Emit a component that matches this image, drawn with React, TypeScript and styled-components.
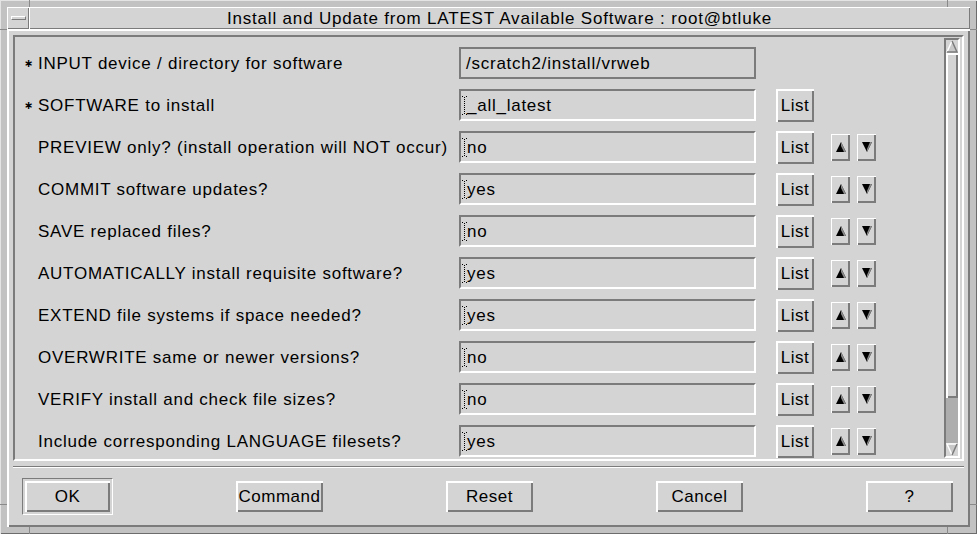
import React from 'react';
import styled, { createGlobalStyle } from 'styled-components';

const BG = '#d4d4d4';
const FRAME = '#c2c2c2';
const DARK = '#7b7b7b';
const LIGHT = '#ffffff';
const TROUGH = '#adadad';

const GlobalStyle = createGlobalStyle`
  html, body { margin: 0; padding: 0; background: ${BG}; }
  body {
    font-family: "Liberation Sans", Arial, Helvetica, sans-serif;
    font-size: 17px;
    letter-spacing: 0.75px;
    color: #000;
  }
  * { box-sizing: border-box; }
`;

const Window = styled.div`
  position: relative;
  width: 977px;
  height: 534px;
  padding: 7px;
  background: ${FRAME};
  box-shadow: inset 1px 1px 0 #e4e4e4, inset -1px -1px 0 #6c6c6c;
  display: flex;
  flex-direction: column;
  overflow: hidden;
`;

const Tick = styled.span<{ $v?: boolean }>`
  position: absolute;
  background: #8a8a8a;
  width: ${p => (p.$v ? '1px' : '7px')};
  height: ${p => (p.$v ? '7px' : '1px')};
`;

const TitleBar = styled.div`
  display: flex;
  height: 22px;
  flex: none;
`;

const Raised = styled.div`
  background: ${BG};
  box-shadow: inset 1px 1px 0 ${LIGHT}, inset -1px -1px 0 ${DARK};
`;

const MenuButton = styled(Raised)`
  width: 22px;
  display: flex;
  align-items: center;
  justify-content: center;
`;

const MenuBar = styled.span`
  width: 15px;
  height: 4px;
  border-top: 1px solid ${LIGHT};
  border-left: 1px solid ${LIGHT};
  border-bottom: 1px solid ${DARK};
  border-right: 1px solid ${DARK};
`;

const TitleText = styled(Raised)`
  flex: 1;
  display: flex;
  align-items: center;
  justify-content: center;
  padding-top: 1px;
  font-size: 17px;
  letter-spacing: 0.82px;
  white-space: nowrap;
`;

const Client = styled(Raised)`
  flex: 1;
  display: flex;
  flex-direction: column;
  padding: 6px 6px 0 6px;
  box-shadow: inset 2px 2px 0 ${LIGHT}, inset -2px -2px 0 ${DARK};
`;

const ScrollFrame = styled.div`
  height: 426px;
  flex: none;
  display: flex;
  border-top: 2px solid ${DARK};
  border-left: 2px solid ${DARK};
  border-bottom: 2px solid ${LIGHT};
  border-right: 2px solid ${LIGHT};
  overflow: hidden;
`;

const Rows = styled.div`
  flex: 1;
  display: flex;
  flex-direction: column;
  gap: 10px;
  padding-top: 10px;
  overflow: hidden;
`;

const Row = styled.div`
  display: flex;
  align-items: center;
  height: 32px;
  flex: none;
`;

const Star = styled.span`
  width: 14px;
  margin-left: 9px;
  font-family: "DejaVu Sans", sans-serif;
  font-size: 11px;
  font-weight: bold;
  letter-spacing: 0;
  line-height: 1;
`;

const Label = styled.span`
  width: 421px;
  padding-top: 1px;
  white-space: nowrap;
`;

const Field = styled.div<{ $readOnly?: boolean }>`
  width: 297px;
  height: 32px;
  display: flex;
  align-items: center;
  padding-top: 1px;
  padding-left: ${p => (p.$readOnly ? '5px' : '1px')};
  border: 2px solid ${DARK};
  border-bottom-color: ${p => (p.$readOnly ? DARK : LIGHT)};
  border-right-color: ${p => (p.$readOnly ? DARK : LIGHT)};
  white-space: nowrap;
`;

const Caret = styled.svg`
  width: 5px;
  height: 19px;
  flex: none;
`;

const ListButton = styled(Raised)`
  width: 38px;
  height: 33px;
  margin-left: 20px;
  display: flex;
  align-items: center;
  justify-content: center;
  padding-top: 1px;
  box-shadow: inset 2px 2px 0 ${LIGHT}, inset -2px -2px 0 ${DARK};
  letter-spacing: 0.5px;
`;

const ArrowButton = styled(Raised)<{ $gap: number }>`
  width: 19px;
  height: 27px;
  margin-left: ${p => p.$gap}px;
  display: flex;
  align-items: center;
  justify-content: center;
  box-shadow: inset 1px 1px 0 ${LIGHT}, inset -2px -2px 0 ${DARK};
`;

const ScrollBar = styled.div`
  width: 16px;
  margin: 1px 2px 0 0;
  height: 420px;
  display: flex;
  flex-direction: column;
  background: ${TROUGH};
  border-top: 2px solid ${DARK};
  border-left: 2px solid ${DARK};
  border-bottom: 2px solid ${LIGHT};
  border-right: 2px solid ${LIGHT};
`;

const ScrollArrow = styled.svg`
  width: 12px;
  height: 13px;
  flex: none;
  background: ${BG};
`;

const Slider = styled.div`
  height: 345px;
  flex: none;
  background: ${BG};
  box-shadow: inset 2px 2px 0 ${LIGHT}, inset -2px -2px 0 ${DARK};
`;

const Trough = styled.div`
  flex: 1;
`;

const Separator = styled.div`
  margin-top: 5px;
  height: 2px;
  flex: none;
  border-top: 1px solid ${DARK};
  border-bottom: 1px solid ${LIGHT};
`;

const Footer = styled.div`
  display: flex;
  justify-content: space-between;
  align-items: flex-start;
  padding: 10px 11px 0 9px;
`;

const DefaultRing = styled.div`
  padding: 2px;
  border-top: 1px solid ${DARK};
  border-left: 1px solid ${DARK};
  border-bottom: 1px solid ${LIGHT};
  border-right: 1px solid ${LIGHT};
`;

const PushButton = styled(Raised)<{ $inRing?: boolean }>`
  width: ${p => (p.$inRing ? '85px' : '87px')};
  height: 31px;
  margin-top: ${p => (p.$inRing ? '0' : '3px')};
  display: flex;
  align-items: center;
  justify-content: center;
  padding-top: 1px;
  box-shadow: inset 2px 2px 0 ${LIGHT}, inset -2px -2px 0 ${DARK};
  letter-spacing: 0.5px;
`;

type Item = { label: string; value: string; star?: boolean; readOnly?: boolean; list?: boolean; arrows?: boolean };

const items: Item[] = [
  { label: 'INPUT device / directory for software', value: '/scratch2/install/vrweb', star: true, readOnly: true },
  { label: 'SOFTWARE to install', value: '_all_latest', star: true, list: true },
  { label: 'PREVIEW only? (install operation will NOT occur)', value: 'no', list: true, arrows: true },
  { label: 'COMMIT software updates?', value: 'yes', list: true, arrows: true },
  { label: 'SAVE replaced files?', value: 'no', list: true, arrows: true },
  { label: 'AUTOMATICALLY install requisite software?', value: 'yes', list: true, arrows: true },
  { label: 'EXTEND file systems if space needed?', value: 'yes', list: true, arrows: true },
  { label: 'OVERWRITE same or newer versions?', value: 'no', list: true, arrows: true },
  { label: 'VERIFY install and check file sizes?', value: 'no', list: true, arrows: true },
  { label: 'Include corresponding LANGUAGE filesets?', value: 'yes', list: true, arrows: true },
];

const CaretIcon = () => (
  <Caret viewBox="0 0 5 19">
    <line x1="2.5" y1="1" x2="2.5" y2="18" stroke="#000" strokeWidth="1" strokeDasharray="1 1" />
    <rect x="0" y="0" width="1" height="1" fill="#000" />
    <rect x="4" y="0" width="1" height="1" fill="#000" />
    <rect x="0" y="18" width="1" height="1" fill="#000" />
    <rect x="4" y="18" width="1" height="1" fill="#000" />
  </Caret>
);

const Tri = ({ up }: { up: boolean }) => (
  <svg width="12" height="12" viewBox="0 0 12 12">
    {up ? (
      <>
        <polygon points="6,1 11,11 1,11" fill="#000" />
        <polygon points="6,1 11,11 9,11 6,5" fill="#8a8a8a" />
      </>
    ) : (
      <>
        <polygon points="1,1 11,1 6,11" fill="#000" />
        <polygon points="9,1 11,1 6,11 6,8" fill="#8a8a8a" />
      </>
    )}
  </svg>
);

const ScrollTri = ({ up }: { up: boolean }) => (
  <ScrollArrow viewBox="0 0 12 13">
    {up ? (
      <>
        <polygon points="6,1 11,12 1,12" fill="#c8c8c8" />
        <polyline points="1,12 6,1" stroke={LIGHT} strokeWidth="1.5" fill="none" />
        <polyline points="6,1 11,12 1,12" stroke={DARK} strokeWidth="1.5" fill="none" />
      </>
    ) : (
      <>
        <polygon points="1,1 11,1 6,12" fill="#c8c8c8" />
        <polyline points="6,12 1,1 11,1" stroke={LIGHT} strokeWidth="1.5" fill="none" />
        <polyline points="11,1 6,12" stroke={DARK} strokeWidth="1.5" fill="none" />
      </>
    )}
  </ScrollArrow>
);

export default function App() {
  return (
    <>
      <GlobalStyle />
      <Window>
        <Tick $v style={{ left: 29, top: 0 }} />
        <Tick style={{ left: 0, top: 29 }} />
        <Tick $v style={{ left: 947, top: 0 }} />
        <Tick style={{ right: 0, top: 29 }} />
        <Tick $v style={{ left: 29, bottom: 0 }} />
        <Tick style={{ left: 0, bottom: 29 }} />
        <Tick $v style={{ left: 947, bottom: 0 }} />
        <Tick style={{ right: 0, bottom: 29 }} />

        <TitleBar>
          <MenuButton>
            <MenuBar />
          </MenuButton>
          <TitleText>Install and Update from LATEST Available Software : root@btluke</TitleText>
        </TitleBar>

        <Client>
          <ScrollFrame>
            <Rows>
              {items.map(it => (
                <Row key={it.label}>
                  <Star>{it.star ? '∗' : ''}</Star>
                  <Label>{it.label}</Label>
                  <Field $readOnly={it.readOnly}>
                    {!it.readOnly && <CaretIcon />}
                    {it.value}
                  </Field>
                  {it.list && <ListButton>List</ListButton>}
                  {it.arrows && (
                    <>
                      <ArrowButton $gap={17}><Tri up /></ArrowButton>
                      <ArrowButton $gap={7}><Tri up={false} /></ArrowButton>
                    </>
                  )}
                </Row>
              ))}
            </Rows>
            <ScrollBar>
              <ScrollTri up />
              <Slider />
              <Trough />
              <ScrollTri up={false} />
            </ScrollBar>
          </ScrollFrame>
          <Separator />
          <Footer>
            <DefaultRing>
              <PushButton $inRing>OK</PushButton>
            </DefaultRing>
            <PushButton>Command</PushButton>
            <PushButton>Reset</PushButton>
            <PushButton>Cancel</PushButton>
            <PushButton>?</PushButton>
          </Footer>
        </Client>
      </Window>
    </>
  );
}
